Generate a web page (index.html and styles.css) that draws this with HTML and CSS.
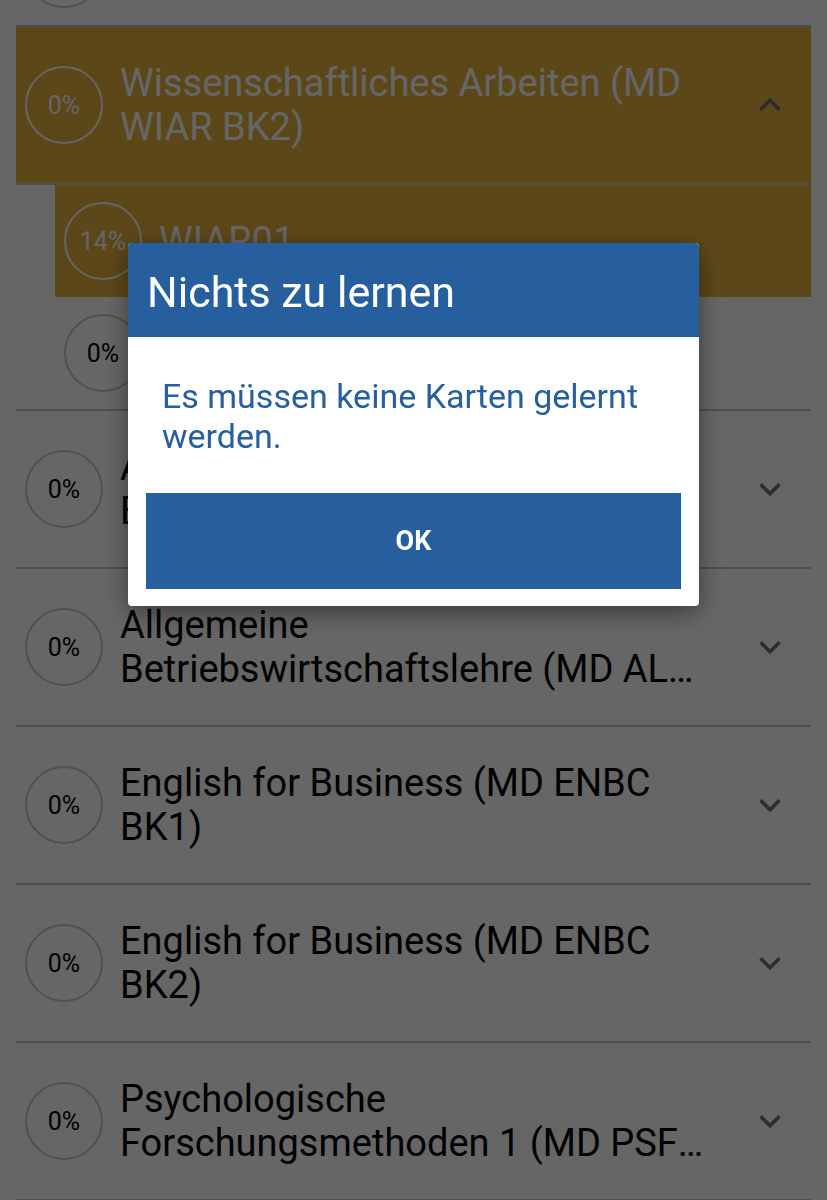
FILE: index.html
```html
<!DOCTYPE html>
<html lang="de">
<head>
    <meta charset="UTF-8">
    <meta name="viewport" content="width=device-width, initial-scale=1.0">
    <title>Module</title>
    <link rel="stylesheet" href="styles.css">
</head>
<body>

    <div class="list">
        <div class="item">
            <div class="row">
                <div class="circle">0%</div>
                <div class="title">Grundlagen (MD GRU)</div>
                <svg class="chevron" viewBox="0 0 24 24"><polyline points="6,9 12,15 18,9"/></svg>
            </div>
        </div>

        <div class="item open">
            <div class="row active">
                <div class="circle">0%</div>
                <div class="title">Wissenschaftliches Arbeiten (MD WIAR BK2)</div>
                <svg class="chevron" viewBox="0 0 24 24"><polyline points="6,15 12,9 18,15"/></svg>
            </div>
            <div class="children">
                <div class="row child active">
                    <div class="circle">14%</div>
                    <div class="title">WIAR01</div>
                </div>
                <div class="row child">
                    <div class="circle">0%</div>
                    <div class="title">WIAR02</div>
                </div>
            </div>
        </div>

        <div class="item">
            <div class="row">
                <div class="circle">0%</div>
                <div class="title">Allgemeine Psychologie Einführung (MD ALPS BK1)</div>
                <svg class="chevron" viewBox="0 0 24 24"><polyline points="6,9 12,15 18,9"/></svg>
            </div>
        </div>

        <div class="item">
            <div class="row">
                <div class="circle">0%</div>
                <div class="title">
                    <span class="line">Allgemeine</span>
                    <span class="line">Betriebswirtschaftslehre (MD ALBW BK1)</span>
                </div>
                <svg class="chevron" viewBox="0 0 24 24"><polyline points="6,9 12,15 18,9"/></svg>
            </div>
        </div>

        <div class="item">
            <div class="row">
                <div class="circle">0%</div>
                <div class="title">English for Business (MD ENBC BK1)</div>
                <svg class="chevron" viewBox="0 0 24 24"><polyline points="6,9 12,15 18,9"/></svg>
            </div>
        </div>

        <div class="item">
            <div class="row">
                <div class="circle">0%</div>
                <div class="title">English for Business (MD ENBC BK2)</div>
                <svg class="chevron" viewBox="0 0 24 24"><polyline points="6,9 12,15 18,9"/></svg>
            </div>
        </div>

        <div class="item">
            <div class="row">
                <div class="circle">0%</div>
                <div class="title">
                    <span class="line">Psychologische</span>
                    <span class="line">Forschungsmethoden 1 (MD PSFM BK1)</span>
                </div>
                <svg class="chevron" viewBox="0 0 24 24"><polyline points="6,9 12,15 18,9"/></svg>
            </div>
        </div>
    </div>

    <!-- dialog over a dimmed list -->
    <div class="scrim">
        <div class="dialog">
            <div class="dialog-head">Nichts zu lernen</div>
            <div class="dialog-body">Es müssen keine Karten gelernt werden.</div>
            <button class="dialog-btn">OK</button>
        </div>
    </div>

</body>
</html>
```

FILE: styles.css
```css
body {
    margin: 0;
    font-family: Roboto, "Noto Sans", Arial, sans-serif;
    background: #fff;
    overflow: hidden;
}
.list {
    margin-top: -87px;
    padding: 0 16px;
}
.item {
    border-bottom: 2px solid #c4c4c4;
}
.row {
    display: flex;
    align-items: center;
    padding-left: 9px;
}
.row.active {
    background: #e6b23e;
    color: #fff;
}
.item.open > .row.active {
    border-bottom: 2px solid #c4c4c4;
}
.children {
    margin-left: 39px;
}
.circle {
    flex: none;
    width: 74px;
    height: 74px;
    border: 2px solid #c8c8c8;
    border-radius: 50%;
    display: flex;
    align-items: center;
    justify-content: center;
    font-size: 25px;
    color: #000;
}
.row.active .circle {
    border-color: #fff;
    color: #fff;
}
.title {
    flex: 1;
    margin: 34px 0 34px 17px;
    max-width: 585px;
    font-size: 38px;
    line-height: 44px;
    display: -webkit-box;
    -webkit-line-clamp: 2;
    -webkit-box-orient: vertical;
    overflow: hidden;
}
.title .line {
    display: block;
    white-space: nowrap;
    overflow: hidden;
    text-overflow: ellipsis;
}
.chevron {
    flex: none;
    width: 38px;
    height: 38px;
    margin-left: auto;
    margin-right: 22px;
    fill: none;
    stroke: #707070;
    stroke-width: 2.3;
}
.scrim {
    position: fixed;
    inset: 0;
    background: rgba(0, 0, 0, 0.6);
    padding-top: 243px;
}
.dialog {
    width: 571px;
    margin: 0 auto;
    background: #fff;
    border-radius: 4px;
    overflow: hidden;
    box-shadow: 0 6px 24px rgba(0, 0, 0, 0.45);
    padding-bottom: 17px;
}
.dialog-head {
    background: #275e9e;
    color: #fff;
    height: 94px;
    line-height: 98px;
    padding-left: 19px;
    font-size: 43px;
}
.dialog-body {
    padding: 39px 30px 37px 34px;
    color: #275e9e;
    font-size: 34px;
    line-height: 40px;
}
.dialog-btn {
    display: block;
    width: 535px;
    height: 96px;
    margin-left: 18px;
    border: none;
    background: #275e9e;
    color: #fff;
    font-family: Roboto, Arial, sans-serif;
    font-weight: bold;
    font-size: 27px;
}
```
